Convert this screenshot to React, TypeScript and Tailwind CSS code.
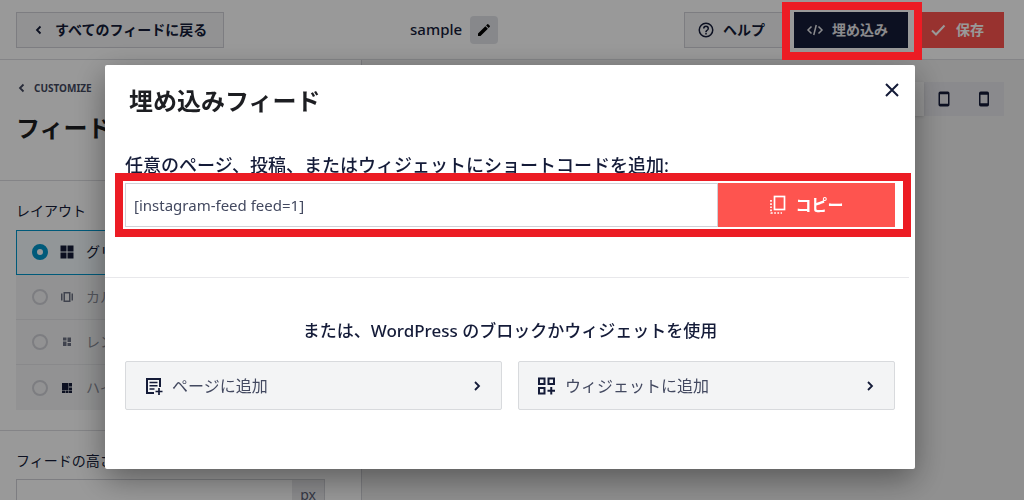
import { useState } from 'react'
import { clsx } from 'clsx'

const NAVY = '#141b38'

const LAYOUTS = [
  { id: 'grid', label: 'グリッド' },
  { id: 'carousel', label: 'カルーセル' },
  { id: 'masonry', label: 'レンガ' },
  { id: 'highlight', label: 'ハイライト' },
]

const TARGETS = [
  { id: 'page', label: 'ページに追加' },
  { id: 'widget', label: 'ウィジェットに追加' },
]

function Chevron({ dir = 'right', size = 12 }: { dir?: 'left' | 'right'; size?: number }) {
  return (
    <svg width={size} height={size} viewBox="0 0 12 12" fill="none" stroke="currentColor" strokeWidth="1.8" className="shrink-0">
      <path d={dir === 'left' ? 'M7.500 2.500 4 6l3.500 3.500' : 'M4 2l4 4-4 4'} />
    </svg>
  )
}

function LayoutIcon({ id }: { id: string }) {
  return (
    <svg width="14" height="14" viewBox="0 0 14 14" fill={NAVY} className="shrink-0">
      {id === 'grid' && <path d="M.5.5h6v6h-6zM7.500.5h6v6h-6zM.5 7.500h6v6h-6zM7.500 7.500h6v6h-6z" />}
      {id === 'carousel' && (
        <path fillRule="evenodd" d="M3.500 2h7v10h-7zM5 3.500v7h4v-7zM1 3.500h1.500v7H1zM11.500 3.500H13v7h-1.500z" />
      )}
      {id === 'masonry' && <path d="M3 2.500h3.500v3H3zM7.500 2.500H11v4.500H7.500zM3 6.500h3.500V11H3zM7.500 8H11v3H7.500z" />}
      {id === 'highlight' && <path d="M2 2h6.500v7H2zM9 2h3v3.500H9zM9 6.500h3V9H9zM2 9.500h3V12H2zM5.500 9.500h3V12h-3zM9 9.500h3V12H9z" />}
    </svg>
  )
}

function TargetIcon({ id }: { id: string }) {
  return (
    <svg width="20" height="20" viewBox="0 0 20 20" fill="none" stroke={NAVY} strokeWidth="2" className="shrink-0">
      {id === 'page' ? (
        <>
          <path d="M10 17H3V3h13v8" />
          <path d="M5.500 6.500h8M5.500 9.750h8M5.500 13h5M11.500 15.500h7M15 12v7" strokeWidth="1.700" />
        </>
      ) : (
        <path d="M2 2.500h5.500V8H2zM11.500 2.500H17V8h-5.500zM2 12h5.500v5.500H2zM10.500 14.750h7.500M14.250 11v7.500" />
      )}
    </svg>
  )
}

function Header() {
  return (
    <header className="flex h-[60px] shrink-0 items-center justify-between border-b border-[#dcdde1] bg-white pl-4 pr-5">
      <button type="button" className="flex h-9 items-center gap-2.5 border border-[#d0d1d7] bg-[#f3f4f5] px-4 text-sm font-semibold">
        <Chevron dir="left" />
        すべてのフィードに戻る
      </button>
      <div className="flex items-center gap-2">
        <span className="text-[15px] font-medium">sample</span>
        <button type="button" aria-label="名前を編集" className="flex size-7 items-center justify-center rounded-sm bg-[#e2e3e8]">
          <svg width="16" height="16" viewBox="0 0 24 24" fill="#000">
            <path d="M3 17.250V21h3.750L17.810 9.940l-3.750-3.750zM20.710 7.040a1 1 0 0 0 0-1.410l-2.340-2.340a1 1 0 0 0-1.410 0l-1.830 1.830 3.750 3.750z" />
          </svg>
        </button>
      </div>
      <div className="flex justify-end gap-2">
        <button type="button" className="flex h-9 items-center gap-2 border border-[#d0d1d7] bg-[#f3f4f5] pl-3 pr-5 text-sm font-semibold">
          <svg width="18" height="18" viewBox="0 0 24 24" fill={NAVY}>
            <path d="M11 18h2v-2h-2zm1-16a10 10 0 1 0 0 20 10 10 0 0 0 0-20m0 18a8 8 0 1 1 0-16 8 8 0 0 1 0 16m0-14a4 4 0 0 0-4 4h2a2 2 0 1 1 4 0c0 2-3 1.750-3 5h2c0-2.250 3-2.500 3-5a4 4 0 0 0-4-4" />
          </svg>
          ヘルプ
        </button>
        <div className="relative">
          <button type="button" className="flex h-9 items-center gap-2 bg-[#141b38] pl-3 pr-5 text-sm font-bold text-white/90">
            <svg width="18" height="18" viewBox="0 0 18 18" fill="none" stroke="currentColor" strokeWidth="1.500">
              <path d="M5.500 5.500 2 9l3.500 3.500M12.500 5.500 16 9l-3.500 3.500M10.250 4l-2.500 10" />
            </svg>
            埋め込み
          </button>
          <div aria-hidden className="pointer-events-none absolute -bottom-3 -left-3 -right-3.5 -top-2.5 z-40 border-8 border-[#ec1c24]" />
        </div>
        <button type="button" className="flex h-9 items-center gap-2 bg-[#fe544f] pl-3 pr-5 text-sm font-bold text-white">
          <svg width="20" height="18" viewBox="0 0 20 18" fill="none" stroke="currentColor" strokeWidth="2">
            <path d="m4 9.500 4 4 8.500-9" />
          </svg>
          保存
        </button>
      </div>
    </header>
  )
}

function Sidebar() {
  const [layout, setLayout] = useState('grid')

  return (
    <aside className="w-[362px] shrink-0 border-r border-[#d0d1d7] bg-white">
      <div className="border-b border-[#dcdde1] px-4 pb-9 pt-5">
        <a href="#customize" className="flex items-center gap-1.5 text-[10px] font-bold leading-4 text-[#434960]">
          <Chevron dir="left" />
          CUSTOMIZE
        </a>
        <h1 className="mt-4 text-2xl font-bold leading-8 text-[#1d1e22]">フィードレイアウト</h1>
      </div>

      <fieldset className="border-b border-[#dcdde1] px-4 pb-5 pt-[18px]">
        <legend className="float-left mb-[7px] text-sm leading-6">レイアウト</legend>
        <div className="clear-both divide-y divide-[#e4e5e8] bg-[#f3f4f5]">
          {LAYOUTS.map((item) => {
            const active = item.id === layout
            return (
              <label
                key={item.id}
                className={clsx(
                  'flex h-[45px] items-center gap-3 pl-4 text-sm',
                  active ? 'bg-[#f3fafd] outline -outline-offset-1 outline-[#0096cc]' : 'text-[#8c8f9a]'
                )}
              >
                <input
                  type="radio"
                  name="layout"
                  checked={active}
                  onChange={() => setLayout(item.id)}
                  className="size-4 appearance-none rounded-full border-2 border-[#d0d1d7] checked:border-[5px] checked:border-[#0096cc] checked:bg-white"
                />
                <span className={clsx('flex', item.id !== 'highlight' && !active && 'opacity-60')}>
                  <LayoutIcon id={item.id} />
                </span>
                {item.label}
              </label>
            )
          })}
        </div>
      </fieldset>

      <div className="px-4 pt-[18px]">
        <label htmlFor="feed-height" className="block text-sm leading-6">フィードの高さ</label>
        <div className="mr-5 mt-1.5 flex h-8 border border-[#d0d1d7]">
          <input id="feed-height" type="text" className="min-w-0 flex-1 px-3 outline-none" />
          <span className="flex w-8 items-center justify-center bg-[#e8e8eb] text-sm leading-none text-[#5b6075]">px</span>
        </div>
      </div>
    </aside>
  )
}

function Preview() {
  return (
    <main className="flex flex-1 items-start justify-end bg-[#f0f0f0] pr-5 pt-[22px]">
      <div className="flex h-[34px] bg-[#e6e6eb]">
        <button type="button" aria-label="デスクトップ" className="w-10 bg-[#f8f8f8] shadow" />
        <button type="button" aria-label="タブレット" className="flex w-10 items-center justify-center">
          <svg width="12" height="16" viewBox="0 0 12 16" fill="none" stroke={NAVY} strokeWidth="1.500">
            <rect x="1.250" y="1.250" width="9.500" height="13.500" rx="1" />
            <path d="M1 2.500h10M1 13.500h10" />
          </svg>
        </button>
        <button type="button" aria-label="モバイル" className="flex w-10 items-center justify-center">
          <svg width="12" height="16" viewBox="0 0 12 16" fill="none" stroke={NAVY} strokeWidth="1.500">
            <rect x="1.750" y="1.250" width="8.500" height="13.500" rx="1" />
            <path d="M2 2.500h8M2 13.500h8" strokeWidth="2.500" />
          </svg>
        </button>
      </div>
    </main>
  )
}

function EmbedDialog({ onClose }: { onClose: () => void }) {
  const shortcode = '[instagram-feed feed=1]'

  return (
    <div className="fixed inset-0 z-20 bg-black/40 px-4 pr-5 pt-[65px]">
      <div
        role="dialog"
        aria-labelledby="embed-title"
        className="relative mx-auto max-w-[810px] rounded-xs bg-white pb-[59px] shadow-[0_10px_32px_rgba(0,0,0,0.4)]"
      >
        <button type="button" aria-label="閉じる" onClick={onClose} className="absolute right-3.5 top-4 p-px">
          <svg width="16" height="16" viewBox="0 0 16 16" fill="none" stroke={NAVY} strokeWidth="2">
            <path d="m2 2 12 12M14 2 2 14" />
          </svg>
        </button>

        <h2 id="embed-title" className="px-6 pt-5 text-2xl font-bold leading-8 text-[#1d1e22]">埋め込みフィード</h2>

        <section className="mr-1.5 border-b border-[#e8e8eb] pb-[50px] pl-5 pr-3.5 pt-8">
          <label htmlFor="shortcode" className="mb-0.5 block text-lg font-medium leading-8">
            任意のページ、投稿、またはウィジェットにショートコードを追加:
          </label>
          <div className="relative flex h-11">
            <input
              id="shortcode"
              readOnly
              value={shortcode}
              className="min-w-0 flex-1 border border-[#d0d1d7] px-2 text-[15px] text-[#434960] outline-none"
            />
            <button
              type="button"
              onClick={() => navigator.clipboard.writeText(shortcode)}
              className="flex w-[177px] items-center justify-center gap-2 bg-[#fe544f] text-base font-bold text-white"
            >
              <svg width="18" height="20" viewBox="0 0 18 20" fill="none" stroke="currentColor" strokeWidth="1.700">
                <rect x="5.500" y="1.500" width="10" height="13" />
                <path d="M2 5v13.500M2 18h11" strokeDasharray="1.700 1.500" />
              </svg>
              コピー
            </button>
            <div aria-hidden className="pointer-events-none absolute -bottom-2.5 -left-2.5 -right-4 -top-2.5 border-8 border-[#ec1c24]" />
          </div>
        </section>

        <section className="px-5 pt-[39px]">
          <h3 className="text-center text-[17px] font-medium leading-7">または、WordPress のブロックかウィジェットを使用</h3>
          <div className="mt-4 grid grid-cols-2 gap-4">
            {TARGETS.map((target) => (
              <button
                key={target.id}
                type="button"
                className="flex h-[49px] items-center gap-2 rounded-xs border border-[#d8dadd] bg-[#f3f4f5] px-[18px] text-base text-[#434960]"
              >
                <TargetIcon id={target.id} />
                <span className="flex-1 text-left">{target.label}</span>
                <span className="text-[#141b38]">
                  <Chevron />
                </span>
              </button>
            ))}
          </div>
        </section>
      </div>
    </div>
  )
}

export default function App() {
  const [open, setOpen] = useState(true)

  return (
    <div className="flex h-screen flex-col overflow-hidden font-['Noto_Sans','Noto_Sans_CJK_JP',sans-serif] text-[#141b38]">
      <Header />
      <div className="flex min-h-0 flex-1">
        <Sidebar />
        <Preview />
      </div>
      {open && <EmbedDialog onClose={() => setOpen(false)} />}
    </div>
  )
}
